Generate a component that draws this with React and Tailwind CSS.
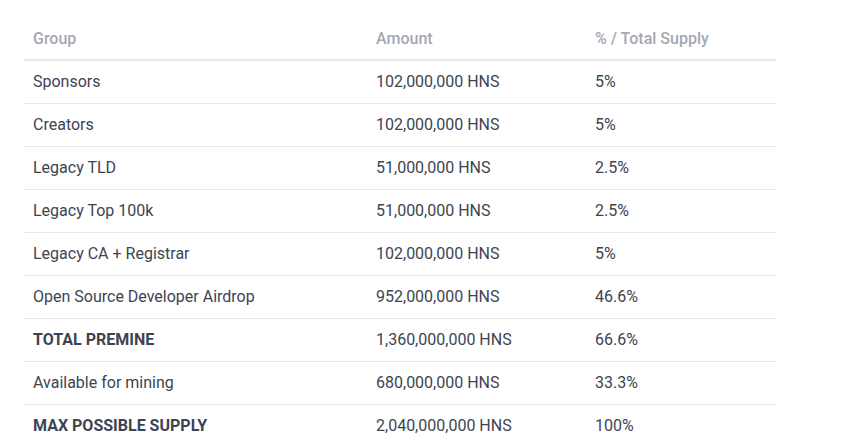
export default function App() {
  const rows = [
    ["Sponsors", "102,000,000 HNS", "5%"],
    ["Creators", "102,000,000 HNS", "5%"],
    ["Legacy TLD", "51,000,000 HNS", "2.5%"],
    ["Legacy Top 100k", "51,000,000 HNS", "2.5%"],
    ["Legacy CA + Registrar", "102,000,000 HNS", "5%"],
    ["Open Source Developer Airdrop", "952,000,000 HNS", "46.6%"],
    ["TOTAL PREMINE", "1,360,000,000 HNS", "66.6%", true],
    ["Available for mining", "680,000,000 HNS", "33.3%"],
    ["MAX POSSIBLE SUPPLY", "2,040,000,000 HNS", "100%", true],
  ];
  return (
    <div className="bg-white w-[867px] h-[447px] overflow-hidden pt-[18px] pl-[24px]" style={{ fontFamily: "Roboto, sans-serif" }}>
      <table className="w-[752px] border-collapse text-[16px] text-[#3d4451]">
        <thead>
          <tr className="border-b-2 border-[#e8e9ec]">
            <th className="w-[343px] h-[42px] px-[9px] text-left font-medium text-[#a3a8b3]">Group</th>
            <th className="w-[219px] px-[9px] text-left font-medium text-[#a3a8b3]">Amount</th>
            <th className="px-[9px] text-left font-medium text-[#a3a8b3]">% / Total Supply</th>
          </tr>
        </thead>
        <tbody>
          {rows.map((r, i) => (
            <tr key={i} className={i < rows.length - 1 ? "border-b border-[#e8e9ec]" : ""}>
              <td className={"h-[43px] px-[9px] " + (r[3] ? "font-bold" : "")}>{r[0]}</td>
              <td className="px-[9px]">{r[1]}</td>
              <td className="px-[9px]">{r[2]}</td>
            </tr>
          ))}
        </tbody>
      </table>
    </div>
  );
}
